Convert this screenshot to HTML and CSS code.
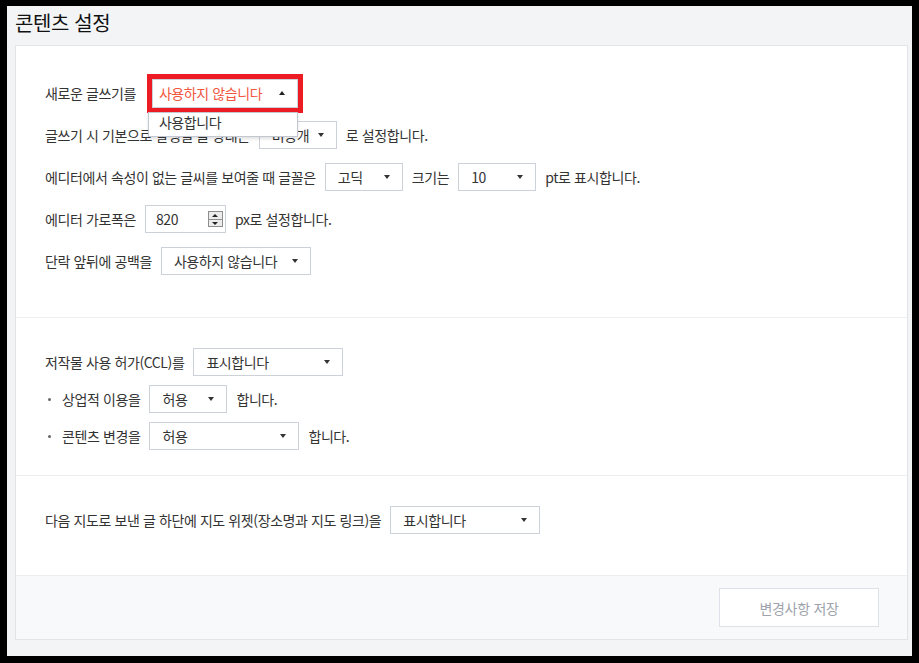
FILE: index.html
```html
<!DOCTYPE html>
<html lang="ko">
<head>
    <meta charset="UTF-8">
    <meta name="viewport" content="width=device-width, initial-scale=1.0">
    <title>콘텐츠 설정</title>
    <link rel="stylesheet" href="styles.css">
</head>
<body>
    <div class="page">
        <h2 class="page-title">콘텐츠 설정</h2>

        <div class="panel">
            <div class="section section-editor">
                <div class="row">
                    <span class="label">새로운 글쓰기를</span>
                    <div class="select select-wide is-open">
                        <span class="select-value">사용하지 않습니다</span>
                        <ul class="select-options">
                            <li>사용합니다</li>
                        </ul>
                    </div>
                </div>
                <div class="row">
                    <span class="label">글쓰기 시 기본으로 발행될 글 상태는</span>
                    <div class="select"><span class="select-value">비공개</span></div>
                    <span class="label">로 설정합니다.</span>
                </div>
                <div class="row">
                    <span class="label">에디터에서 속성이 없는 글씨를 보여줄 때 글꼴은</span>
                    <div class="select"><span class="select-value">고딕</span></div>
                    <span class="label">크기는</span>
                    <div class="select"><span class="select-value">10</span></div>
                    <span class="label">pt로 표시합니다.</span>
                </div>
                <div class="row">
                    <span class="label">에디터 가로폭은</span>
                    <div class="number-input">
                        <span class="number-value">820</span>
                        <span class="spinner">
                            <span class="spin spin-up"></span>
                            <span class="spin spin-down"></span>
                        </span>
                    </div>
                    <span class="label">px로 설정합니다.</span>
                </div>
                <div class="row">
                    <span class="label">단락 앞뒤에 공백을</span>
                    <div class="select select-wide"><span class="select-value">사용하지 않습니다</span></div>
                </div>
            </div>

            <div class="section section-ccl">
                <div class="row">
                    <span class="label">저작물 사용 허가(CCL)를</span>
                    <div class="select select-wide"><span class="select-value">표시합니다</span></div>
                </div>
                <div class="row">
                    <span class="bullet"></span>
                    <span class="label">상업적 이용을</span>
                    <div class="select"><span class="select-value">허용</span></div>
                    <span class="label">합니다.</span>
                </div>
                <div class="row">
                    <span class="bullet"></span>
                    <span class="label">콘텐츠 변경을</span>
                    <div class="select select-wide"><span class="select-value">허용</span></div>
                    <span class="label">합니다.</span>
                </div>
            </div>

            <div class="section section-map">
                <div class="row">
                    <span class="label">다음 지도로 보낸 글 하단에 지도 위젯(장소명과 지도 링크)을</span>
                    <div class="select select-wide"><span class="select-value">표시합니다</span></div>
                </div>
            </div>

            <div class="panel-footer">
                <button class="btn-save" type="button">변경사항 저장</button>
            </div>
        </div>
    </div>
</body>
</html>
```

FILE: styles.css
```css
* {
    margin: 0;
    padding: 0;
    box-sizing: border-box;
}

body {
    background: #000;
    font-family: "Noto Sans CJK KR", "Noto Sans", sans-serif;
    color: #333;
}

.page {
    margin: 6px 7px 0;
    height: 650px;
    padding: 0 4px 0 8px;
    background: #f3f4f6;
}

.page-title {
    padding-top: 3px;
    margin-bottom: 9px;
    font-size: 20px;
    line-height: 27px;
    font-weight: 400;
    color: #111;
    letter-spacing: -0.4px;
}

.panel {
    background: #fff;
    border: 1px solid #e1e4e9;
}

.section {
    display: flex;
    flex-direction: column;
    padding: 30px 29px;
    border-bottom: 1px solid #eceef1;
}

.section-editor {
    padding-top: 33px;
    padding-bottom: 42px;
    gap: 14px;
}

.section-ccl {
    padding-bottom: 25px;
    gap: 9px;
}

.section-map {
    padding-bottom: 41px;
    border-bottom: none;
}

.row {
    display: flex;
    align-items: center;
    gap: 9px;
    height: 28px;
    font-size: 14px;
    letter-spacing: -0.4px;
}

.label {
    white-space: nowrap;
}

.bullet {
    width: 3px;
    height: 3px;
    margin: 0 2px 0 3px;
    border-radius: 50%;
    background: #666;
}

/* custom select */
.select {
    position: relative;
    display: flex;
    align-items: center;
    width: 78px;
    height: 28px;
    padding: 0 24px 0 12px;
    border: 1px solid #cdd2da;
    background: #fff;
    color: #333;
}

.select-wide {
    width: 150px;
}

.select::after {
    content: '';
    position: absolute;
    right: 12px;
    top: 50%;
    margin-top: -2px;
    border-left: 3.5px solid transparent;
    border-right: 3.5px solid transparent;
    border-top: 4px solid #333;
}

.select.is-open {
    width: 146px;
    height: 29px;
    margin-left: 7px;
    padding-left: 6px;
    outline: 5px solid #ed1c24;
    color: #f2563e;
}

.select.is-open::after {
    border-top: none;
    border-bottom: 4px solid #222;
}

.select-options {
    display: none;
    list-style: none;
}

.is-open .select-options {
    display: block;
    position: absolute;
    z-index: 2;
    top: 32px;
    left: -5px;
    width: 150px;
    height: 25px;
    padding: 0 10px;
    border: 1px solid #c3c8d0;
    background: #fff;
    box-shadow: 0 2px 3px rgba(0, 0, 0, 0.12);
    color: #333;
    line-height: 18px;
}

/* number field */
.number-input {
    position: relative;
    display: flex;
    align-items: center;
    width: 81px;
    height: 28px;
    padding-left: 10px;
    border: 1px solid #cdd2da;
    background: #fff;
}

.spinner {
    position: absolute;
    right: 2px;
    top: 5px;
    width: 15px;
    height: 16px;
    display: flex;
    flex-direction: column;
    border: 1px solid #8e8e8e;
    background: #ececec;
}

.spin {
    position: relative;
    flex: 1;
}

.spin-up {
    border-bottom: 1px solid #8e8e8e;
}

.spin::after {
    content: '';
    position: absolute;
    left: 3px;
    top: 2px;
    border-left: 3.5px solid transparent;
    border-right: 3.5px solid transparent;
}

.spin-up::after {
    border-bottom: 3px solid #222;
}

.spin-down::after {
    top: 2px;
    border-top: 3px solid #222;
}

.panel-footer {
    display: flex;
    justify-content: flex-end;
    padding: 12px 28px 12px;
    border-top: 1px solid #eceef1;
    background: #f8f9fb;
}

.btn-save {
    width: 160px;
    height: 39px;
    border: 1px solid #dde1e8;
    background: #fff;
    color: #9ea3ab;
    font-family: inherit;
    font-size: 14px;
    letter-spacing: -0.3px;
}
```
